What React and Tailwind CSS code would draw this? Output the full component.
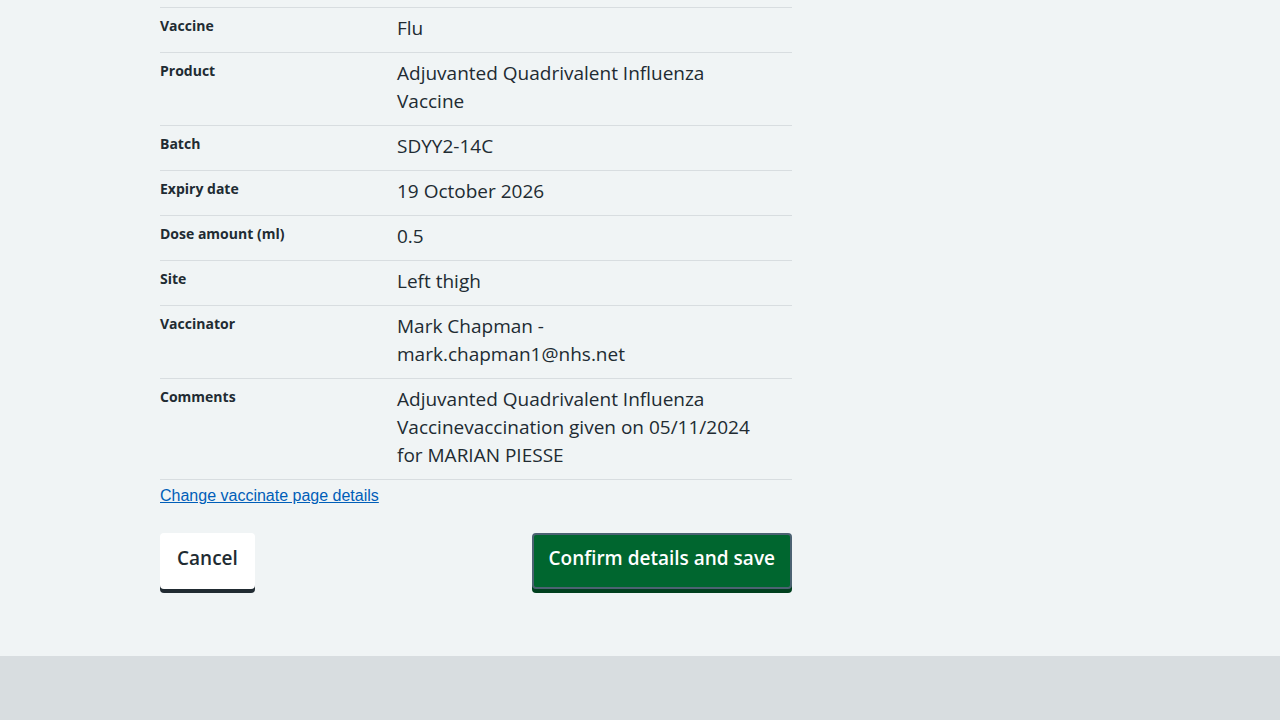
import React from 'react';

const rows = [
  { label: 'Vaccine', value: 'Flu' },
  { label: 'Product', value: 'Adjuvanted Quadrivalent Influenza Vaccine' },
  { label: 'Batch', value: 'SDYY2-14C' },
  { label: 'Expiry date', value: '19 October 2026' },
  { label: 'Dose amount (ml)', value: '0.5' },
  { label: 'Site', value: 'Left thigh' },
  { label: 'Vaccinator', value: 'Mark Chapman - mark.chapman1@nhs.net' },
  {
    label: 'Comments',
    value: 'Adjuvanted Quadrivalent Influenza Vaccinevaccination given on 05/11/2024 for MARIAN PIESSE',
  },
];

const SummaryRow = ({ label, value }) => (
  <div className="flex border-b border-[#d8dde0] pt-[6px] pb-[10px]">
    <dt className="w-[237px] shrink-0 text-[14px] leading-[24px] font-bold">{label}</dt>
    <dd className="w-[370px] text-[19px] leading-[28px]">{value}</dd>
  </div>
);

export default function App() {
  return (
    <div className="min-h-[720px] flex flex-col bg-[#f0f4f5] text-[#212b32]" style={{ fontFamily: '"Open Sans", "Noto Sans", sans-serif' }}>
      <main className="flex-1 pt-[7px] pb-[63px]">
        <div className="w-[632px] ml-[160px]">
          <dl className="border-t border-[#d8dde0]">
            {rows.map((r) => (
              <SummaryRow key={r.label} {...r} />
            ))}
          </dl>
          <a
            href="#"
            className="block mt-[6px] text-[16px] leading-[20px] text-[#005eb8] underline w-fit"
            style={{ fontFamily: '"Liberation Sans", Arial, sans-serif' }}
          >
            Change vaccinate page details
          </a>
          <div className="flex justify-between items-start mt-[27px] mb-[1px]">
            <button className="h-[56px] px-[17px] pb-[5px] bg-white rounded-[4px] shadow-[0_4px_0_#212b32] text-[19px] font-semibold text-[#212b32]">
              Cancel
            </button>
            <button className="h-[56px] px-[15px] pb-[5px] bg-[#00662f] border-2 border-[#4c6272] rounded-[4px] shadow-[0_4px_0_#00401e] text-[19px] font-semibold text-white">
              Confirm details and save
            </button>
          </div>
        </div>
      </main>
      <footer className="h-[64px] bg-[#d8dde0]" />
    </div>
  );
}
